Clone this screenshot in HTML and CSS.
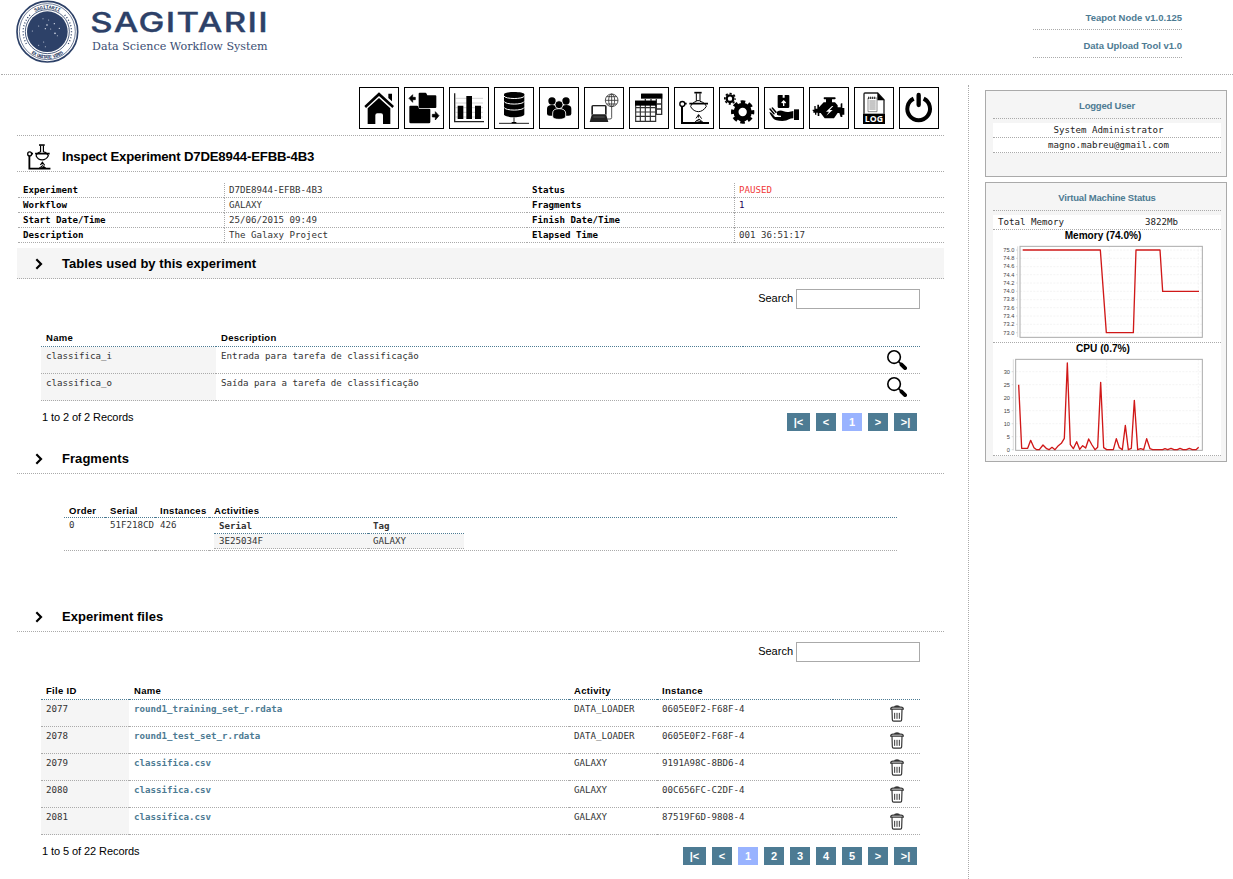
FILE: index.html
```html
<!DOCTYPE html>
<html lang="en">
<head>
<meta charset="utf-8">
<title>Sagitarii</title>
<link rel="stylesheet" href="styles.css">
</head>
<body>
<svg class="defs" width="0" height="0" aria-hidden="true">
  <symbol id="flask" viewBox="105 24 114 120">
    <g fill="none" stroke="#000" stroke-width="4">
      <path d="M126 78V129H207" stroke-width="6"/>
      <path d="M122 71h18M148 71h56" stroke-width="5"/>
      <circle cx="127" cy="72" r="7.500" fill="#fff"/>
      <path d="M163 38h22" stroke-width="5"/>
      <path d="M169 40v24c-10 3-16 10-17 16 5 10 15 15 23 15s18-5 24-16c-3-7-9-13-19-15V40" stroke-width="3"/>
      <path d="M170 62h9" stroke-width="3"/>
      <path d="M164 127l13-10 12 10M168 115l8-11 9 12M175 104v9M169 122l16 3" stroke-width="3"/>
    </g>
  </symbol>
  <symbol id="flask-small" viewBox="117 34 92 100">
    <g fill="none" stroke="#000" stroke-width="5">
      <path d="M126 78V129H207" stroke-width="7"/>
      <path d="M122 71h18M148 71h56" stroke-width="6"/>
      <circle cx="127" cy="72" r="7.500" fill="#fff"/>
      <path d="M163 38h22" stroke-width="6"/>
      <path d="M169 40v24c-10 3-16 10-17 16 5 10 15 15 23 15s18-5 24-16c-3-7-9-13-19-15V40" stroke-width="4.500"/>
      <path d="M164 127l13-10 12 10M168 115l8-11 9 12M175 104v9M169 122l16 3" stroke-width="4"/>
    </g>
  </symbol>
  <symbol id="lens" viewBox="0 0 62 62">
    <circle cx="22" cy="22" r="19.500" fill="#fff" stroke="#000" stroke-width="5"/>
    <path d="M36 36l8 8" stroke="#000" stroke-width="5"/>
    <path d="M45 45l11 11" stroke="#000" stroke-width="12" stroke-linecap="round"/>
  </symbol>
  <symbol id="trash" viewBox="0 0 42 50">
    <g fill="none" stroke="#333" stroke-width="3.500" stroke-linejoin="round">
      <path d="M6 14l1 30q0 4 4 4h20q4 0 4-4l1-30M2 12q0-6 7-6h24q7 0 7 6zM14 6q0-4 7-4t7 4"/>
      <path d="M14 23v18M21 23v18M28 23v18" stroke-width="3"/>
    </g>
  </symbol>
  <symbol id="chevron" viewBox="0 0 24 36">
    <path d="M4 4l14 14L4 32" fill="none" stroke="#000" stroke-width="6.500"/>
  </symbol>
</svg>

<header class="top">
  <svg class="brand" viewBox="0 0 900 210" width="300" height="70">
    <circle cx="142" cy="95" r="91" fill="#fff" stroke="#2d4168" stroke-width="5"/>
    <circle cx="142" cy="95" r="84" fill="none" stroke="#2d4168" stroke-width="2"/>
    <circle cx="142" cy="95" r="66" fill="none" stroke="#2d4168" stroke-width="2.500"/>
    <circle cx="142" cy="95" r="61" fill="#2d4168"/>
    <path id="arc-top" d="M73 95a69 69 0 0 1 138 0" fill="none"/>
    <path id="arc-bottom" d="M61 95a81 81 0 0 0 162 0" fill="none"/>
    <path d="M90 45A72 72 0 0 0 82 136M194 45A72 72 0 0 1 202 136" fill="none" stroke="#2d4168" stroke-width="4" stroke-dasharray="3 6"/>
    <text class="seal"><textPath href="#arc-top" startOffset="50%" text-anchor="middle" textLength="76">SAGITARII</textPath></text>
    <text class="seal"><textPath href="#arc-bottom" startOffset="50%" text-anchor="middle" textLength="104">EX UNITATE VIRES</textPath></text>
    <g fill="#dfe4ee">
      <circle cx="141" cy="75" r="2.500"/><circle cx="163" cy="71" r="2"/><circle cx="136" cy="86" r="2"/>
      <circle cx="165" cy="100" r="2.500"/><circle cx="178" cy="85" r="2"/><circle cx="152" cy="87" r="1.500"/>
      <circle cx="129" cy="56" r="1.500"/><circle cx="116" cy="78" r="1.500"/><circle cx="97" cy="93" r="1.500"/>
      <circle cx="131" cy="126" r="1.500"/><circle cx="116" cy="136" r="1.500"/><circle cx="136" cy="140" r="1.500"/>
      <circle cx="172" cy="107" r="1.500"/><circle cx="146" cy="60" r="1.500"/>
    </g>
    <text class="name" transform="scale(1.3 1)" x="208" y="95" textLength="410">SAGITARII</text>
    <text class="tagline" x="276" y="151" textLength="527" lengthAdjust="spacingAndGlyphs">Data Science Workflow System</text>
  </svg>
  <nav class="downloads">
    <a>Teapot Node v1.0.125</a>
    <a>Data Upload Tool v1.0</a>
  </nav>
</header>

<div class="page">
<main class="main">
  <nav class="toolbar">
    <a><svg viewBox="30 24 114 120"><path d="M43 78L87 37l45 41-5 6-40-36-39 36zM115 41h11v23l-11-10zM53 85l34-31 34 31v47H99V106q0-6-6-6H82q-6 0-6 6v26H53z"/></svg></a>
    <a><svg viewBox="165 24 114 120"><path d="M206 41q0-3 3-3h17q3 0 4 4l2 4h24q3 0 3 3v32q0 3-3 3h-47q-3 0-3-3zM178 80q0-3 3-3h20q3 0 4 4l2 5h31q3 0 3 3v37q0 4-4 4h-55q-4 0-4-4z"/><path d="M177 55l11-11v8h8v7h-8v8zM267 107l-11-12v8h-9v8h9v9z" stroke="#000" stroke-width="2"/></svg></a>
    <a><svg viewBox="300 24 114 120"><path d="M317 55h82M317 69h82M317 83h82M317 97h82M317 111h82" stroke="#bbb" stroke-width="2"/><path d="M314 40v85h88" fill="none" stroke="#222" stroke-width="4"/><path d="M323 77h17v40h-17zM349 48h17v69h-17zM375 77h18v40h-18z"/></svg></a>
    <a><svg viewBox="435 24 114 120"><path d="M462 43c0-9 61-9 61 0v60c0 12-61 12-61 0z"/><path d="M462 48c3 10 58 10 61 0M462 64c3 11 58 11 61 0M462 82c3 11 58 11 61 0" fill="none" stroke="#fff" stroke-width="3"/><path d="M447 130h90M492 112v17" stroke="#222" stroke-width="3"/><path d="M485 126h14v4h-14z"/></svg></a>
    <a><svg viewBox="570 24 114 120"><circle cx="606" cy="63" r="11"/><circle cx="648" cy="63" r="11"/><path d="M591 101V86q0-11 15-11t15 11v21h-22q-8 0-8-6zM664 101V86q0-11-15-11t-15 11v21h22q8 0 8-6z"/><circle cx="627" cy="74" r="12" stroke="#fff" stroke-width="2.500"/><path d="M608 109V99q0-13 19-13t20 13v10q0 9-20 9t-19-9z" stroke="#fff" stroke-width="2.500"/></svg></a>
    <a><svg viewBox="705 24 114 120"><g fill="none" stroke="#333" stroke-width="2.500"><circle cx="785" cy="61" r="19"/><ellipse cx="785" cy="61" rx="9" ry="19"/><path d="M785 42v38M766 61h38M770 50h30M770 72h30M785 81v32q0 4-5 4h-8"/></g><path d="M724 80q0-5 5-5h36q5 0 5 5v24h-46z" fill="#222"/><path d="M729 79h36v23h-36z" fill="#fff"/><path d="M725 105h44l6 21h-56z" fill="#222"/><path d="M730 111h34" stroke="#777" stroke-width="2"/></svg></a>
    <a><svg viewBox="-30 24 114 120"><path d="M5 43h60v60H47M16 57v9M33 57v9M49 57v46M16 72h49M47 87h18" fill="none" stroke="#333" stroke-width="4"/><path d="M3 41h64v15H3z"/><path d="M-13 64h60v60h-60zM1 72v51M16 72v51M31 72v51M-12 83h58M-12 96h58M-12 109h58" fill="none" stroke="#333" stroke-width="3.500"/><path d="M-15 62h64v15h-64z"/></svg></a>
    <a><svg><use href="#flask"/></svg></a>
    <a><svg viewBox="240 24 114 120"><circle cx="308" cy="96" r="20" fill="none" stroke="#000" stroke-width="15"/><circle cx="308" cy="96" r="30" fill="none" stroke="#000" stroke-width="10" stroke-dasharray="13.500 10.060" stroke-dashoffset="6.750"/><circle cx="270" cy="56" r="10" fill="none" stroke="#000" stroke-width="7"/><circle cx="270" cy="56" r="15.500" fill="none" stroke="#000" stroke-width="5" stroke-dasharray="6.500 5.670" stroke-dashoffset="3.250"/></svg></a>
    <a><svg viewBox="375 24 114 120"><path d="M413 47q0-2 3-2h12v8h6v-8h11q3 0 3 2v33q0 4-4 4h-27q-4 0-4-4z"/><path d="M431 78V65M425 69l6-6 6 6" fill="none" stroke="#fff" stroke-width="4"/><path d="M411 95q10-6 20-1 7 3 15 2 7-1 14-3v22q-8 0-13 3-7 5-20 5-21 0-28-8-8-10-11-18 5-1 9 5l8 9h18v-4q-8 0-12-3z"/><path d="M390 87l12 14M397 84l11 13" stroke="#000" stroke-width="4.500" stroke-linecap="round"/><path d="M462 88h15v32h-15z"/></svg></a>
    <a><svg viewBox="510 24 114 120"><path d="M551 54q0-2 2-2h31q3 0 3 3t-3 3h-8v9h9l8 9v6h9V73q0-3 3-3h2v14h6v20h-6v7h-5l-4-12h-5l-11 16h-28l-12-16h-4v9h-5V98h-4v6h-4V98h-5v-5h-2V89h5V78h4v8h5V74h5v8l14-15h7V58h-5q-2 0-2-4z"/><path d="M576 78l-18 17h9l-8 12 19-17h-9l11-12z" fill="#fff"/></svg></a>
    <a><svg viewBox="645 24 114 120"><path d="M672 101V42q0-3 3-3h38l19 20v42" fill="#fff" stroke="#222" stroke-width="4"/><path d="M712 38l22 23h-22z"/><path d="M684 54h27v41h-27zM688 63h19M688 69h19M688 75h19M688 81h19M688 87h19" fill="none" stroke="#555" stroke-width="2"/><path d="M686 50v7M692 50v7M698 50v7M704 50v7" stroke="#000" stroke-width="2.500"/><path d="M669 101h66v31h-66z"/><text class="log" x="702" y="126" text-anchor="middle" textLength="55" lengthAdjust="spacingAndGlyphs">LOG</text></svg></a>
    <a><svg viewBox="780 24 114 120"><path d="M821 56a34 34 0 1 0 30 0" fill="none" stroke="#000" stroke-width="12"/><path d="M836 45v30" stroke="#000" stroke-width="13" stroke-linecap="round"/></svg></a>
  </nav>

  <div class="title"><svg class="title-icon"><use href="#flask-small"/></svg><h1>Inspect Experiment D7DE8944-EFBB-4B3</h1></div>

  <table class="details">
    <tr><th>Experiment</th><td>D7DE8944-EFBB-4B3</td><th>Status</th><td class="paused">PAUSED</td></tr>
    <tr><th>Workflow</th><td>GALAXY</td><th>Fragments</th><td class="count">1</td></tr>
    <tr><th>Start Date/Time</th><td>25/06/2015 09:49</td><th>Finish Date/Time</th><td></td></tr>
    <tr><th>Description</th><td>The Galaxy Project</td><th>Elapsed Time</th><td>001 36:51:17</td></tr>
  </table>

  <section class="panel tables">
    <div class="heading shaded"><svg class="chevron"><use href="#chevron"/></svg><h2>Tables used by this experiment</h2></div>
    <div class="list">
      <div class="search"><label for="s1">Search</label><input id="s1" type="text"></div>
      <table class="records">
        <colgroup><col class="w175"><col class="w527"><col></colgroup>
        <thead><tr><th>Name</th><th>Description</th><th></th></tr></thead>
        <tbody>
          <tr><td>classifica_i</td><td>Entrada para tarefa de classificação</td><td class="act"><svg class="lens"><use href="#lens"/></svg></td></tr>
          <tr><td>classifica_o</td><td>Saída para a tarefa de classificação</td><td class="act"><svg class="lens"><use href="#lens"/></svg></td></tr>
        </tbody>
      </table>
      <div class="foot"><span>1 to 2 of 2 Records</span>
        <div class="pager"><a class="end">|&lt;</a><a>&lt;</a><a class="on">1</a><a>&gt;</a><a class="end">&gt;|</a></div></div>
    </div>
  </section>

  <section class="panel fragments">
    <div class="heading"><svg class="chevron"><use href="#chevron"/></svg><h2>Fragments</h2></div>
    <table class="frag">
      <colgroup><col class="w41"><col class="w50"><col class="w54"><col></colgroup>
      <thead><tr><th>Order</th><th>Serial</th><th>Instances</th><th>Activities</th></tr></thead>
      <tbody><tr><td>0</td><td>51F218CD</td><td>426</td><td>
        <table class="activities">
          <colgroup><col class="w154"><col></colgroup>
          <thead><tr><th>Serial</th><th>Tag</th></tr></thead>
          <tbody><tr><td>3E25034F</td><td>GALAXY</td></tr></tbody>
        </table></td></tr></tbody>
    </table>
  </section>

  <section class="panel files">
    <div class="heading"><svg class="chevron"><use href="#chevron"/></svg><h2>Experiment files</h2></div>
    <div class="list">
      <div class="search"><label for="s2">Search</label><input id="s2" type="text"></div>
      <table class="records">
        <colgroup><col class="w88"><col class="w440"><col class="w88"><col class="w176"><col></colgroup>
        <thead><tr><th>File ID</th><th>Name</th><th>Activity</th><th>Instance</th><th></th></tr></thead>
        <tbody>
          <tr><td>2077</td><td><a>round1_training_set_r.rdata</a></td><td>DATA_LOADER</td><td>0605E0F2-F68F-4</td><td class="act"><svg class="trash"><use href="#trash"/></svg></td></tr>
          <tr><td>2078</td><td><a>round1_test_set_r.rdata</a></td><td>DATA_LOADER</td><td>0605E0F2-F68F-4</td><td class="act"><svg class="trash"><use href="#trash"/></svg></td></tr>
          <tr><td>2079</td><td><a>classifica.csv</a></td><td>GALAXY</td><td>9191A98C-8BD6-4</td><td class="act"><svg class="trash"><use href="#trash"/></svg></td></tr>
          <tr><td>2080</td><td><a>classifica.csv</a></td><td>GALAXY</td><td>00C656FC-C2DF-4</td><td class="act"><svg class="trash"><use href="#trash"/></svg></td></tr>
          <tr><td>2081</td><td><a>classifica.csv</a></td><td>GALAXY</td><td>87519F6D-9808-4</td><td class="act"><svg class="trash"><use href="#trash"/></svg></td></tr>
        </tbody>
      </table>
      <div class="foot"><span>1 to 5 of 22 Records</span>
        <div class="pager"><a class="end">|&lt;</a><a>&lt;</a><a class="on">1</a><a>2</a><a>3</a><a>4</a><a>5</a><a>&gt;</a><a class="end">&gt;|</a></div></div>
    </div>
  </section>
</main>

<aside class="side">
  <section class="box user">
    <h3>Logged User</h3>
    <div class="line center">System Administrator</div>
    <div class="line center">magno.mabreu@gmail.com</div>
  </section>
  <section class="box vm">
    <h3>Virtual Machine Status</h3>
    <div class="line pair"><span>Total Memory</span><span>3822Mb</span></div>
    <svg class="chart" viewBox="39 165 684 336">
      <text class="ctitle" x="369" y="191" text-anchor="middle" textLength="230" lengthAdjust="spacingAndGlyphs">Memory (74.0%)</text>
      <path d="M120 225H666M120 250H666M120 275H666M120 299H666M120 324H666M120 349H666M120 374H666M120 398H666M120 423H666M120 448H666M120 473H666M388 214V486M655 214V486" stroke="#eee" stroke-width="2" stroke-dasharray="6 4"/>
      <path d="M113 214V486M108 225h5M108 250h5M108 275h5M108 299h5M108 324h5M108 349h5M108 374h5M108 398h5M108 423h5M108 448h5M108 473h5" fill="none" stroke="#ccc" stroke-width="2"/>
      <rect x="120" y="214" width="547" height="273" fill="none" stroke="#aaa" stroke-width="3"/>
      <g class="tick"><text x="103" y="231">75.0</text><text x="103" y="256">74.8</text><text x="103" y="280">74.6</text><text x="103" y="305">74.4</text><text x="103" y="330">74.2</text><text x="103" y="355">74.0</text><text x="103" y="379">73.8</text><text x="103" y="404">73.6</text><text x="103" y="429">73.4</text><text x="103" y="454">73.2</text><text x="103" y="479">73.0</text></g>
      <path class="plot" d="M128 225H361L379 473H460L468 225H540L548 349H657"/>
    </svg>
    <svg class="chart cpu" viewBox="39 24 684 336">
      <text class="ctitle" x="369" y="50" text-anchor="middle" textLength="162" lengthAdjust="spacingAndGlyphs">CPU (0.7%)</text>
      <path d="M107 110H666M107 149H666M107 188H666M107 227H666M107 266H666M107 305H666M380 73V345M655 73V345" stroke="#eee" stroke-width="2" stroke-dasharray="6 4"/>
      <path d="M100 73V346M95 110h5M95 149h5M95 188h5M95 227h5M95 266h5M95 305h5M95 344h5" fill="none" stroke="#ccc" stroke-width="2"/>
      <rect x="107" y="73" width="560" height="273" fill="none" stroke="#aaa" stroke-width="3"/>
      <g class="tick"><text x="90" y="116">30</text><text x="90" y="155">25</text><text x="90" y="194">20</text><text x="90" y="233">15</text><text x="90" y="272">10</text><text x="90" y="311">5</text><text x="90" y="350">0</text></g>
      <path class="plot" d="M116 149L125 340H143L152 316 162 338 170 344H178L189 330 200 341 207 344 216 337 225 344 235 332 244 325 253 310 262 84 271 329 280 341 290 320 299 343 308 332 317 339 326 312 336 330 345 344 353 337 362 142 371 338 380 344H400L409 311 418 338 427 344 436 271 445 344 454 340 463 196 473 344 482 341 491 344 500 311 510 341 518 344H548L555 341 563 344 573 340 582 344H592L600 340 609 344H619L628 340 637 344H648L656 337"/>
    </svg>
  </section>
</aside>
</div>
</body>
</html>
```
FILE: styles.css
```css
* { box-sizing: border-box; }
body {
  margin: 0;
  height: 879px;
  overflow: hidden;
  background: #fff;
  color: #000;
  font-family: "Liberation Sans", Arial, sans-serif;
}
h1, h2, h3 { margin: 0; font-weight: bold; }
.defs { display: none; }

.top {
  display: flex;
  justify-content: space-between;
  height: 75px;
  margin-left: 1px;
  padding-right: 51px;
  border-bottom: 1px dotted #aaa;
}
.brand { display: block; margin-left: -1px; }
.seal { font: bold 15px "Liberation Mono", monospace; fill: #2d4168; }
.name {
  font: 500 80px Inter, sans-serif;
  fill: #2d4168;
  stroke: #2d4168;
  stroke-width: 1px;
  stroke-linejoin: round;
}
.tagline { font: 33px "DejaVu Serif", serif; fill: #3a4d72; }
.downloads { width: 149px; padding-top: 2px; }
.downloads a {
  display: block;
  height: 28px;
  padding-top: 10px;
  border-bottom: 1px dotted #aaa;
  color: #4d7b93;
  font-weight: bold;
  font-size: 9.5px;
  line-height: 12px;
  text-align: right;
}

.page { display: flex; }
.main {
  flex: none;
  width: 969px;
  height: 794px;
  margin-top: 10px;
  padding: 2px 24px 0 17px;
  border-right: 1px dotted #aaa;
}
.toolbar {
  display: flex;
  justify-content: flex-end;
  gap: 5px;
  height: 49px;
  padding-right: 5px;
  border-bottom: 1px dotted #aaa;
}
.toolbar a { width: 40px; height: 42px; border: 1px solid #000; }
.toolbar svg { display: block; width: 38px; height: 40px; }
.log { font: bold 25px "Open Sans", sans-serif; fill: #fff; }

.title {
  display: flex;
  align-items: center;
  height: 36px;
  padding-top: 7px;
  border-bottom: 1px dotted #aaa;
}
.title-icon { width: 24px; height: 26px; margin: 0 11px 0 10px; }
h1, h2 { font-size: 13px; line-height: 16px; }
.title h1 { font-size: 13.2px; letter-spacing: -0.18px; }

table { border-spacing: 0; table-layout: fixed; }
td, th { padding: 0; text-align: left; vertical-align: top; white-space: nowrap; }
td { font: 9.14px/12px "DejaVu Sans Mono", monospace; color: #333; }

.details { width: 926px; margin: 11px 0 5px 1px; }
.details td, .details th {
  height: 15px;
  padding: 1px 0 0 5px;
  border-bottom: 1px dotted #aaa;
  font: 9.14px/12px "DejaVu Sans Mono", monospace;
}
.details th { width: 206px; font-weight: bold; }
.details th:nth-child(3) { width: 207px; }
.details td { border-left: 1px dotted #aaa; padding-left: 4px; }
.details td:nth-child(2) { width: 303px; }
.details .paused { color: #f03838; }
.details .count { color: #205; }

.heading {
  display: flex;
  align-items: center;
  height: 31px;
  border-bottom: 1px dotted #aaa;
}
.heading h2 { padding-top: 2px; letter-spacing: 0.05px; }
.shaded { background: #f5f5f5; }
.chevron { width: 8px; height: 12px; margin: 2px 19px 0 18px; }
.tables { height: 195px; }
.fragments { height: 158px; }

.list { width: 879px; margin-left: 24px; padding-top: 10px; }
.search {
  display: flex;
  justify-content: flex-end;
  gap: 3px;
  height: 40px;
  font-size: 11px;
  line-height: 19px;
}
.search input { width: 124px; height: 20px; margin: 0; border: 1px solid #aaa; background: #fff; }
.records { width: 879px; }
.records th, .frag th { font-size: 9.5px; line-height: 12px; letter-spacing: 0.3px; }
.records th { height: 18px; padding: 3px 0 0 5px; border-bottom: 1px dotted #4d7b93; }
.records td { height: 27px; padding: 3px 0 0 5px; border-bottom: 1px dotted #aaa; }
.records td:first-child { background: #f5f5f5; }
.records a { color: #4d7b93; font-weight: bold; }
.records td.act { padding-right: 13px; text-align: right; }
.act svg { display: block; margin-left: auto; }
.lens { width: 20px; height: 20px; }
.trash { width: 14px; height: 17px; margin: 2px 3px 0 0; }
.w175 { width: 175px; } .w527 { width: 527px; }
.w88 { width: 88px; } .w440 { width: 440px; } .w176 { width: 176px; }
.w41 { width: 41px; } .w50 { width: 50px; } .w54 { width: 54px; } .w154 { width: 154px; }

.foot {
  display: flex;
  justify-content: space-between;
  padding: 10px 3px 0 1px;
  font-size: 11px;
  letter-spacing: -0.08px;
  line-height: 13px;
}
.pager { display: flex; gap: 6px; padding-top: 2px; }
.pager a {
  width: 20px;
  height: 18px;
  background: #4d7b93;
  color: #fff;
  font-weight: bold;
  line-height: 18px;
  text-align: center;
}
.pager .end { width: 23px; }
.pager .on { background: #99b3ff; }

.frag { width: 833px; margin: 30px 0 0 47px; }
.frag th { height: 14px; padding: 1px 0 0 5px; border-bottom: 1px dotted #4d7b93; }
.frag td { height: 33px; padding: 1px 0 0 5px; border-bottom: 1px dotted #aaa; }
.frag .activities { width: 250px; }
.activities th, .activities td { height: 15px !important; padding-top: 1px !important; }
.activities th { font: bold 9.14px/12px "DejaVu Sans Mono", monospace; letter-spacing: 0; }
.activities td { background: #f5f5f5; }

.side { width: 242px; margin: 15px 0 0 16px; }
.box {
  padding: 8px 5px 0 7px;
  border: 1px solid #aaa;
  background: #f5f5f5;
}
.user { height: 87px; margin-bottom: 5px; }
.vm { height: 280px; }
.box h3 {
  height: 20px;
  margin-bottom: 4px;
  border-bottom: 1px dotted #aaa;
  color: #4d7b93;
  font-size: 9.5px;
  letter-spacing: -0.2px;
  line-height: 13px;
  text-align: center;
}
.line {
  height: 15px;
  padding-top: 1px;
  border-bottom: 1px dotted #aaa;
  background: #fff;
  color: #222;
  font: 9.14px/12px "DejaVu Sans Mono", monospace;
}
.center { padding-left: 3px; text-align: center; }
.pair { display: grid; grid-template-columns: 147px 1fr; padding-left: 5px; }
.chart { display: block; width: 228px; height: 113px; background: #fff; border-bottom: 1px dotted #aaa; }
.ctitle { font: bold 31px "Liberation Sans", sans-serif; }
.tick { font: 17px "Liberation Sans", sans-serif; fill: #444; text-anchor: end; }
.plot { fill: none; stroke: #d01818; stroke-width: 4; stroke-linejoin: round; }
```
